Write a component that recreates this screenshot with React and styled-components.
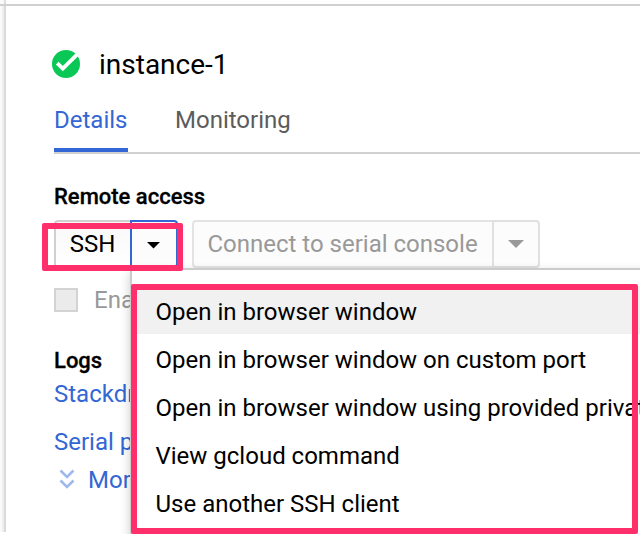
import React from "react";
import styled, { createGlobalStyle } from "styled-components";

const Global = createGlobalStyle`
  *, *::before, *::after { box-sizing: border-box; }
  html, body { margin: 0; overflow: hidden; background: #fff; }
  body { font-family: Roboto, "Liberation Sans", sans-serif; font-size: 24px; color: #000; }
  button { font: inherit; margin: 0; }
`;

const Page = styled.div`
  width: 640px;
  height: 534px;
  position: relative;
  overflow: hidden;
  display: flex;
  flex-direction: column;
  background: #fff;
`;

const TopStrip = styled.div`
  flex: none;
  height: 6px;
  border-bottom: 2px solid #d0d0d0;
  padding-left: 4px;
  background: linear-gradient(to right, #fafafa 4px, #fff 4px);

  &::before {
    content: "";
    display: block;
    width: 2px;
    height: 4px;
    background: #ddd;
  }
`;

const Body = styled.div`
  flex: none;
  display: flex;
  height: 526px;
`;

const Rail = styled.div`
  flex: none;
  width: 6px;
  border-right: 2px solid #dadada;
  background: linear-gradient(to right, #fafafa 2px, #efefef 2px);
`;

const Content = styled.main`
  flex: 1;
  min-width: 0;
  padding-left: 48px;
  display: flex;
  flex-direction: column;
`;

const Heading = styled.header`
  display: flex;
  align-items: center;
  height: 68px;
  margin: 24px 0 0 -2px;
`;

const StatusIcon = styled.svg`
  flex: none;
  width: 28px;
  height: 28px;
  display: block;
`;

const InstanceName = styled.h1`
  margin: 2px 0 0 19px;
  font-size: 28px;
  line-height: 36px;
  font-weight: 400;
`;

const Tabs = styled.nav`
  display: flex;
  gap: 47px;
  height: 56px;
  border-bottom: 2px solid #d0d0d0;
`;

const Tab = styled.a`
  height: 54px;
  min-width: 74px;
  padding-top: 8px;
  line-height: 28px;
  color: ${(p) => (p.$active ? "#3367d6" : "#5c5c5c")};
  border-bottom: 4px solid ${(p) => (p.$active ? "#3367d6" : "transparent")};
`;

const SectionTitle = styled.h2`
  margin: ${(p) => p.$top}px 0 0;
  font-size: 22px;
  line-height: 28px;
  font-weight: 500;
  -webkit-text-stroke: 0.3px currentColor;
`;

const ButtonRow = styled.div`
  display: flex;
  gap: 14px;
  margin-top: 9px;
`;

const Split = styled.div`
  display: flex;
  height: 48px;
  color: ${(p) => (p.$disabled ? "#999" : "#000")};
`;

const Main = styled.button`
  width: ${(p) => p.$width}px;
  padding: 0 1px 0 0;
  color: inherit;
  background: linear-gradient(#f8f8f8, #fff);
  border: 2px solid #d0d0d0;
  border-right: 0;
  border-radius: 4px 0 0 4px;
  white-space: nowrap;
  ${(p) => p.disabled && "background: #fcfcfc; border-color: #e3e3e3;"}
`;

const Arrow = styled.button`
  width: 48px;
  display: flex;
  align-items: center;
  justify-content: center;
  padding: ${(p) => (p.disabled ? "0" : "3px 1px 0 0")};
  color: inherit;
  background: #fcfcfc;
  border: 2px solid ${(p) => (p.disabled ? "#e0e0e0" : "#3367d6")};
  border-radius: 0 4px 4px 0;
`;

const Caret = styled.svg`
  display: block;
  width: ${(p) => p.$size}px;
  height: ${(p) => p.$size / 2}px;
  fill: currentColor;
`;

const CheckRow = styled.label`
  display: flex;
  align-items: center;
  gap: 16px;
  height: 28px;
  margin-top: 18px;
  color: #999;
  white-space: nowrap;
`;

const Box = styled.span`
  width: 24px;
  height: 24px;
  border: 2px solid #d3d3d3;
  background: #ebebeb;
`;

const Link = styled.a`
  display: flex;
  align-items: center;
  height: 28px;
  margin-top: ${(p) => p.$top}px;
  color: #3367d6;
  white-space: nowrap;
`;

const Chevrons = styled.svg`
  width: 16px;
  height: 20px;
  margin: -3px 13px 0 5px;
  fill: none;
  stroke: #a0b9ec;
  stroke-width: 2.6;
`;

const Menu = styled.ul`
  position: absolute;
  left: 130px;
  top: 268px;
  width: 620px;
  height: 290px;
  margin: 0;
  padding: 16px 0;
  list-style: none;
  background: #fff;
  border: 2px solid #ccc;
  box-shadow: 0 4px 10px rgba(0, 0, 0, 0.2);
`;

const MenuItem = styled.li`
  height: 48px;
  padding: 0 24px 0 23.5px;
  line-height: 53px;
  white-space: nowrap;
  background: ${(p) => (p.$hover ? "#f1f1f1" : "transparent")};
`;

const Highlight = styled.div`
  position: absolute;
  left: ${(p) => p.$x}px;
  top: ${(p) => p.$y}px;
  width: ${(p) => p.$w}px;
  height: ${(p) => p.$h}px;
  border: 6px solid #ff2f6c;
  border-radius: 2px;
  pointer-events: none;
`;

const items = [
  "Open in browser window",
  "Open in browser window on custom port",
  "Open in browser window using provided private SSH key",
  "View gcloud command",
  "Use another SSH client",
];

const CaretIcon = ({ size }) => (
  <Caret $size={size} viewBox="0 0 16 8"><path d="M0 0h16L8 8z" /></Caret>
);

export default function App() {
  return (
    <>
      <Global />
      <Page>
        <TopStrip />
        <Body>
          <Rail />
          <Content>
            <Heading>
              <StatusIcon viewBox="0 0 28 28">
                <circle cx="14" cy="14" r="14" fill="#0ac855" />
                <path d="M5.2 13.2l5.600 5.500L25.500 4.200" fill="none" stroke="#fff" strokeWidth="3.8" />
              </StatusIcon>
              <InstanceName>instance-1</InstanceName>
            </Heading>
            <Tabs>
              <Tab $active>Details</Tab>
              <Tab>Monitoring</Tab>
            </Tabs>
            <SectionTitle $top={29}>Remote access</SectionTitle>
            <ButtonRow>
              <Split>
                <Main $width={76}>SSH</Main>
                <Arrow aria-label="SSH options"><CaretIcon size={13} /></Arrow>
              </Split>
              <Split $disabled>
                <Main $width={300} disabled>Connect to serial console</Main>
                <Arrow disabled aria-label="Serial console options"><CaretIcon size={16} /></Arrow>
              </Split>
            </ButtonRow>
            <CheckRow><Box />Enable connecting to serial ports</CheckRow>
            <SectionTitle $top={33}>Logs</SectionTitle>
            <Link $top={5}>Stackdriver Logging</Link>
            <Link $top={20}>Serial port 1 (console)</Link>
            <Link $top={10}>
              <Chevrons viewBox="0 0 16 20">
                <path d="M1.5 1.5L8 8l6.500-6.500M1.500 11.500L8 18l6.500-6.500" />
              </Chevrons>
              More
            </Link>
          </Content>
        </Body>
        <Menu>
          {items.map((label, i) => (
            <MenuItem key={label} $hover={i === 0}>{label}</MenuItem>
          ))}
        </Menu>
        <Highlight $x={42} $y={223} $w={141} $h={48} />
        <Highlight $x={131} $y={284} $w={507} $h={250} />
      </Page>
    </>
  );
}
